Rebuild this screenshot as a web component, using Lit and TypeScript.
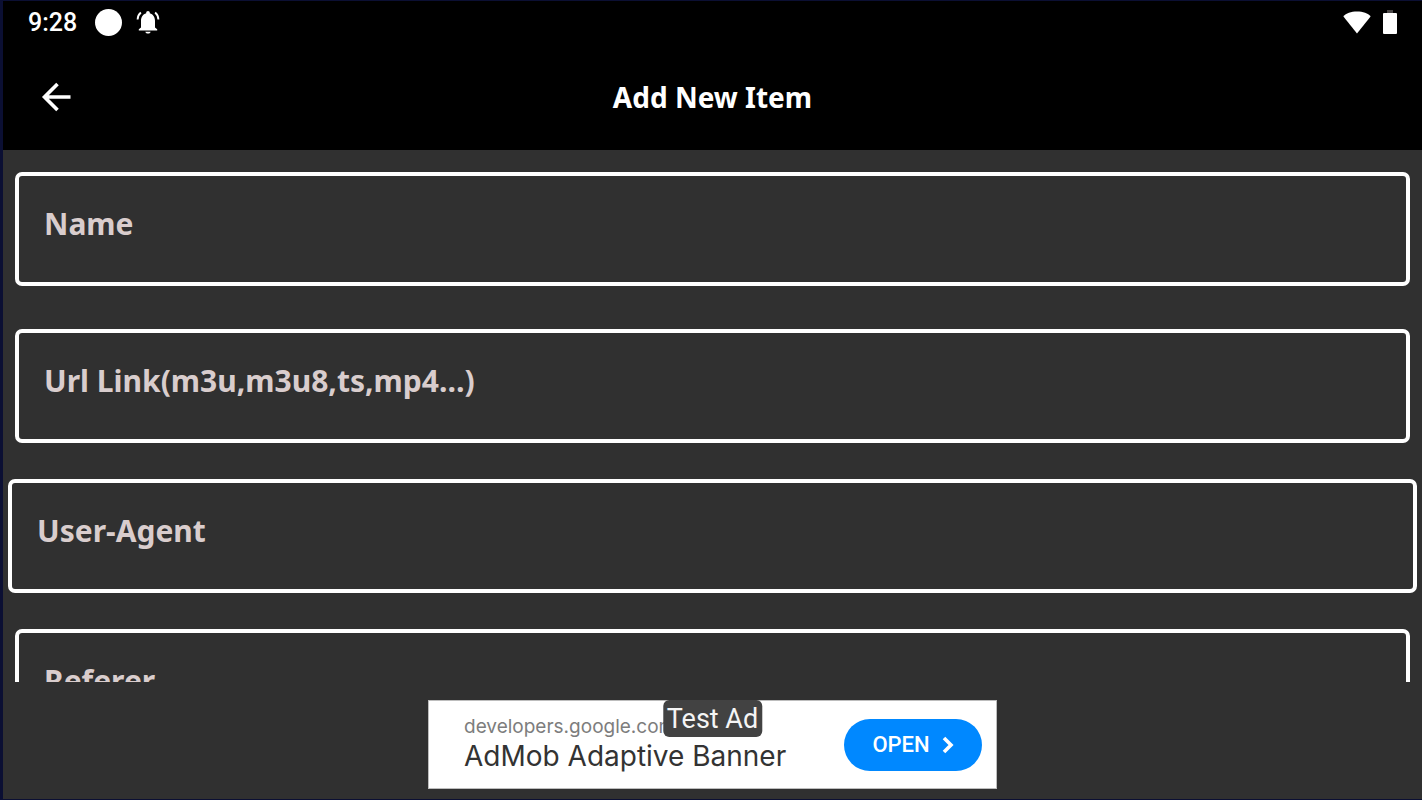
import { LitElement, html, css } from "lit";
import { customElement, property } from "lit/decorators.js";

@customElement("status-bar")
class StatusBar extends LitElement {
  static styles = css`
    :host {
      display: flex;
      align-items: center;
      justify-content: space-between;
      height: 42px;
      padding: 0 25px;
      background: #000;
      color: #fff;
      font: 500 25px/42px Roboto, sans-serif;
    }
    .group {
      display: flex;
      align-items: center;
    }
    .clock {
      padding-top: 2px;
      margin-right: 18px;
    }
    .dot {
      width: 27px;
      height: 27px;
      margin-right: 14px;
      border-radius: 50%;
      background: #fff;
    }
    .wifi {
      margin-right: 12px;
    }
    svg {
      display: block;
      fill: #fff;
    }
  `;

  render() {
    return html`
      <div class="group">
        <span class="clock">9:28</span>
        <span class="dot"></span>
        <svg width="24" height="24" viewBox="0 0 24 24" aria-hidden="true">
          <path d="M12 23.600c1.500 0 2.600-.8 2.600-1.900H9.400C9.400 22.800 10.500 23.600 12 23.600z" />
          <path d="M19 17.500v-6.700c0-3.700-2-6.700-5.200-7.500V2.800C13.800 1.800 13 1 12 1s-1.800.8-1.800 1.800v.5C7 4.100 5 7.100 5 10.800v6.700L2.800 19.200V20.600h18.400v-1.400z" />
          <path d="M1.600 9.500C1.700 6.500 2.800 4.200 4.900 2.500" fill="none" stroke="#fff" stroke-width="1.900" />
          <path d="M22.400 9.500C22.300 6.500 21.200 4.200 19.100 2.500" fill="none" stroke="#fff" stroke-width="1.900" />
        </svg>
      </div>
      <div class="group">
        <svg class="wifi" width="28" height="24" viewBox="0 0 28 24" aria-hidden="true">
          <path d="M14 23.500L.4 6.500C3 3.300 8 1.500 14 1.500S25 3.300 27.600 6.500z" />
        </svg>
        <svg width="14" height="24" viewBox="0 0 14 24" aria-hidden="true">
          <rect x="4" y="0" width="6" height="4" fill="#4a4646" />
          <rect x="0" y="3" width="14" height="21" rx="1" />
        </svg>
      </div>
    `;
  }
}

@customElement("text-field")
class TextField extends LitElement {
  @property() label = "";
  @property() name = "";

  static styles = css`
    :host {
      display: block;
    }
    .box {
      display: block;
      box-sizing: border-box;
      width: 100%;
      height: 114px;
      padding: 0 25px 12px;
      border: 4px solid #fff;
      border-radius: 7px;
      outline: none;
      background: transparent;
      color: #fff;
      font: 700 30px/44px "Noto Sans", sans-serif;
    }
    .box::placeholder {
      color: #d9cdcd;
      opacity: 1;
    }
  `;

  render() {
    return html`<input class="box" type="text" name=${this.name} placeholder=${this.label} aria-label=${this.label} />`;
  }
}

@customElement("ad-banner")
class AdBanner extends LitElement {
  static styles = css`
    :host {
      position: relative;
      display: flex;
      align-items: center;
      justify-content: space-between;
      box-sizing: border-box;
      width: 569px;
      max-width: 100%;
      height: 89px;
      padding: 0 14px 0 35px;
      border: 1px solid #bdbdbd;
      background: #fff;
    }
    .copy {
      display: flex;
      flex-direction: column;
      padding-bottom: 2px;
      white-space: nowrap;
    }
    .site {
      color: #7d7d7d;
      font: 400 19px/24px Inter, sans-serif;
    }
    .title {
      color: #333;
      font: 400 28px/34px Inter, sans-serif;
    }
    .badge {
      position: absolute;
      top: -1px;
      left: 50%;
      transform: translateX(-50%);
      padding: 1px 4px 0;
      border-radius: 6px;
      background: #424242;
      color: #f5f5f5;
      font: 400 27px/36px Roboto, sans-serif;
      white-space: nowrap;
    }
    .open {
      display: flex;
      align-items: center;
      justify-content: center;
      gap: 12px;
      width: 138px;
      height: 52px;
      padding: 0;
      border: 0;
      border-radius: 26px;
      background: #0088ff;
      color: #fff;
      font: 500 22px/52px Roboto, sans-serif;
      cursor: pointer;
    }
  `;

  render() {
    return html`
      <div class="copy">
        <span class="site">developers.google.com</span>
        <span class="title">AdMob Adaptive Banner</span>
      </div>
      <button class="open" type="button">
        OPEN
        <svg width="12" height="18" viewBox="0 0 12 18" fill="none" stroke="#fff" stroke-width="3.600" aria-hidden="true">
          <path d="M2 2l7 7-7 7" />
        </svg>
      </button>
      <span class="badge">Test Ad</span>
    `;
  }
}

@customElement("app-root")
class AppRoot extends LitElement {
  static styles = css`
    :host {
      display: flex;
      flex-direction: column;
      box-sizing: border-box;
      height: 100vh;
      border: solid #0b0f33;
      border-width: 1px 0 1px 3px;
      background: #303030;
    }
    .bar {
      display: grid;
      grid-template-columns: 106px 1fr 106px;
      align-items: center;
      height: 107px;
      background: #000;
    }
    .back {
      display: flex;
      align-items: center;
      justify-content: center;
      height: 107px;
      padding: 0;
      border: 0;
      background: none;
      cursor: pointer;
    }
    .title {
      margin: 0;
      color: #fff;
      text-align: center;
      font: 700 28px/40px "Noto Sans", sans-serif;
    }
    .form {
      display: flex;
      flex: 1;
      flex-direction: column;
      gap: 36px;
      min-height: 0;
      padding: 22px 12px 0;
      overflow-y: auto;
      scrollbar-width: none;
    }
    .field {
      flex: none;
    }
    .spaced {
      margin-bottom: 7px;
    }
    .wide {
      margin: 0 -7px;
    }
    .ad {
      display: flex;
      justify-content: center;
      padding: 18px 0 10px;
    }
  `;

  render() {
    return html`
      <status-bar></status-bar>
      <header class="bar">
        <button class="back" type="button" aria-label="Back">
          <svg width="30" height="30" viewBox="0 0 30 30" fill="none" stroke="#fff" stroke-width="3.600" aria-hidden="true">
            <path d="M29.500 15H4M16.500 2L3.500 15l13 13" />
          </svg>
        </button>
        <h1 class="title">Add New Item</h1>
      </header>
      <form class="form">
        <text-field class="field spaced" name="name" label="Name"></text-field>
        <text-field class="field" name="url" label="Url Link(m3u,m3u8,ts,mp4…)"></text-field>
        <text-field class="field wide" name="agent" label="User-Agent"></text-field>
        <text-field class="field" name="referer" label="Referer"></text-field>
      </form>
      <footer class="ad">
        <ad-banner></ad-banner>
      </footer>
    `;
  }
}
